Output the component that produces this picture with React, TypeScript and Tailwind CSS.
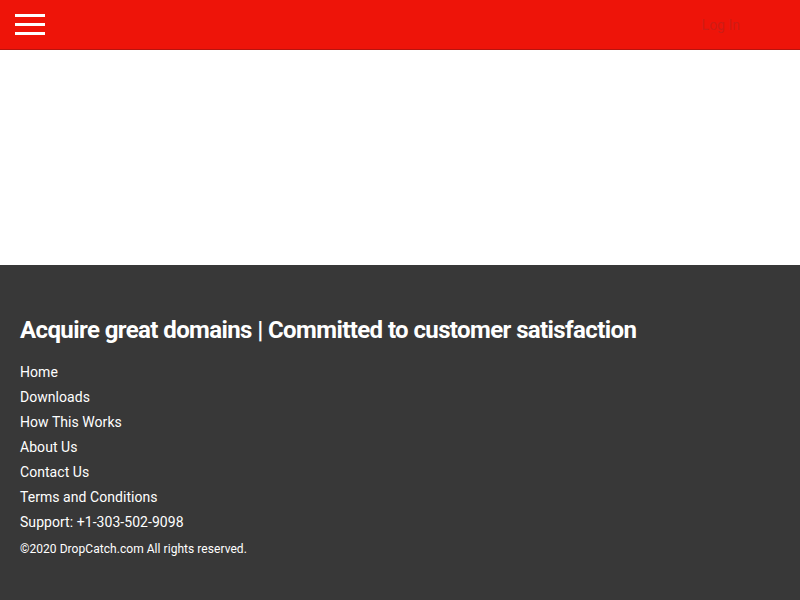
import React from "react";

const links = [
  "Home",
  "Downloads",
  "How This Works",
  "About Us",
  "Contact Us",
  "Terms and Conditions",
  "Support: +1-303-502-9098",
];

export default function App() {
  return (
    <div className="min-h-[600px] flex flex-col bg-white" style={{ fontFamily: "Roboto, 'Liberation Sans', sans-serif" }}>
      <header className="h-[50px] bg-[#ee1409] border-b border-[#b8140e] flex items-center justify-between pl-[15px] pr-[60px] shrink-0">
        <button className="w-[30px] h-[21px] flex flex-col justify-between" aria-label="menu">
          <span className="block h-[3px] bg-white" />
          <span className="block h-[3px] bg-white" />
          <span className="block h-[3px] bg-white" />
        </button>
        <a className="text-[14px] text-[#cf1c15] leading-none">Log In</a>
      </header>
      <div className="h-[215px]" />
      <footer className="bg-[#383838] flex-1 px-5 pt-[50px] pb-10 text-white">
        <h2 className="text-[24px] font-bold tracking-[-0.6px] leading-[30px]">
          Acquire great domains | Committed to customer satisfaction
        </h2>
        <ul className="mt-[15px]">
          {links.map((l) => (
            <li key={l} className="text-[14px] leading-[25px] tracking-[0.05px]">{l}</li>
          ))}
        </ul>
        <p className="text-[12px] leading-[25px] mt-[2px] tracking-[0.05px]">©2020 DropCatch.com All rights reserved.</p>
      </footer>
    </div>
  );
}
